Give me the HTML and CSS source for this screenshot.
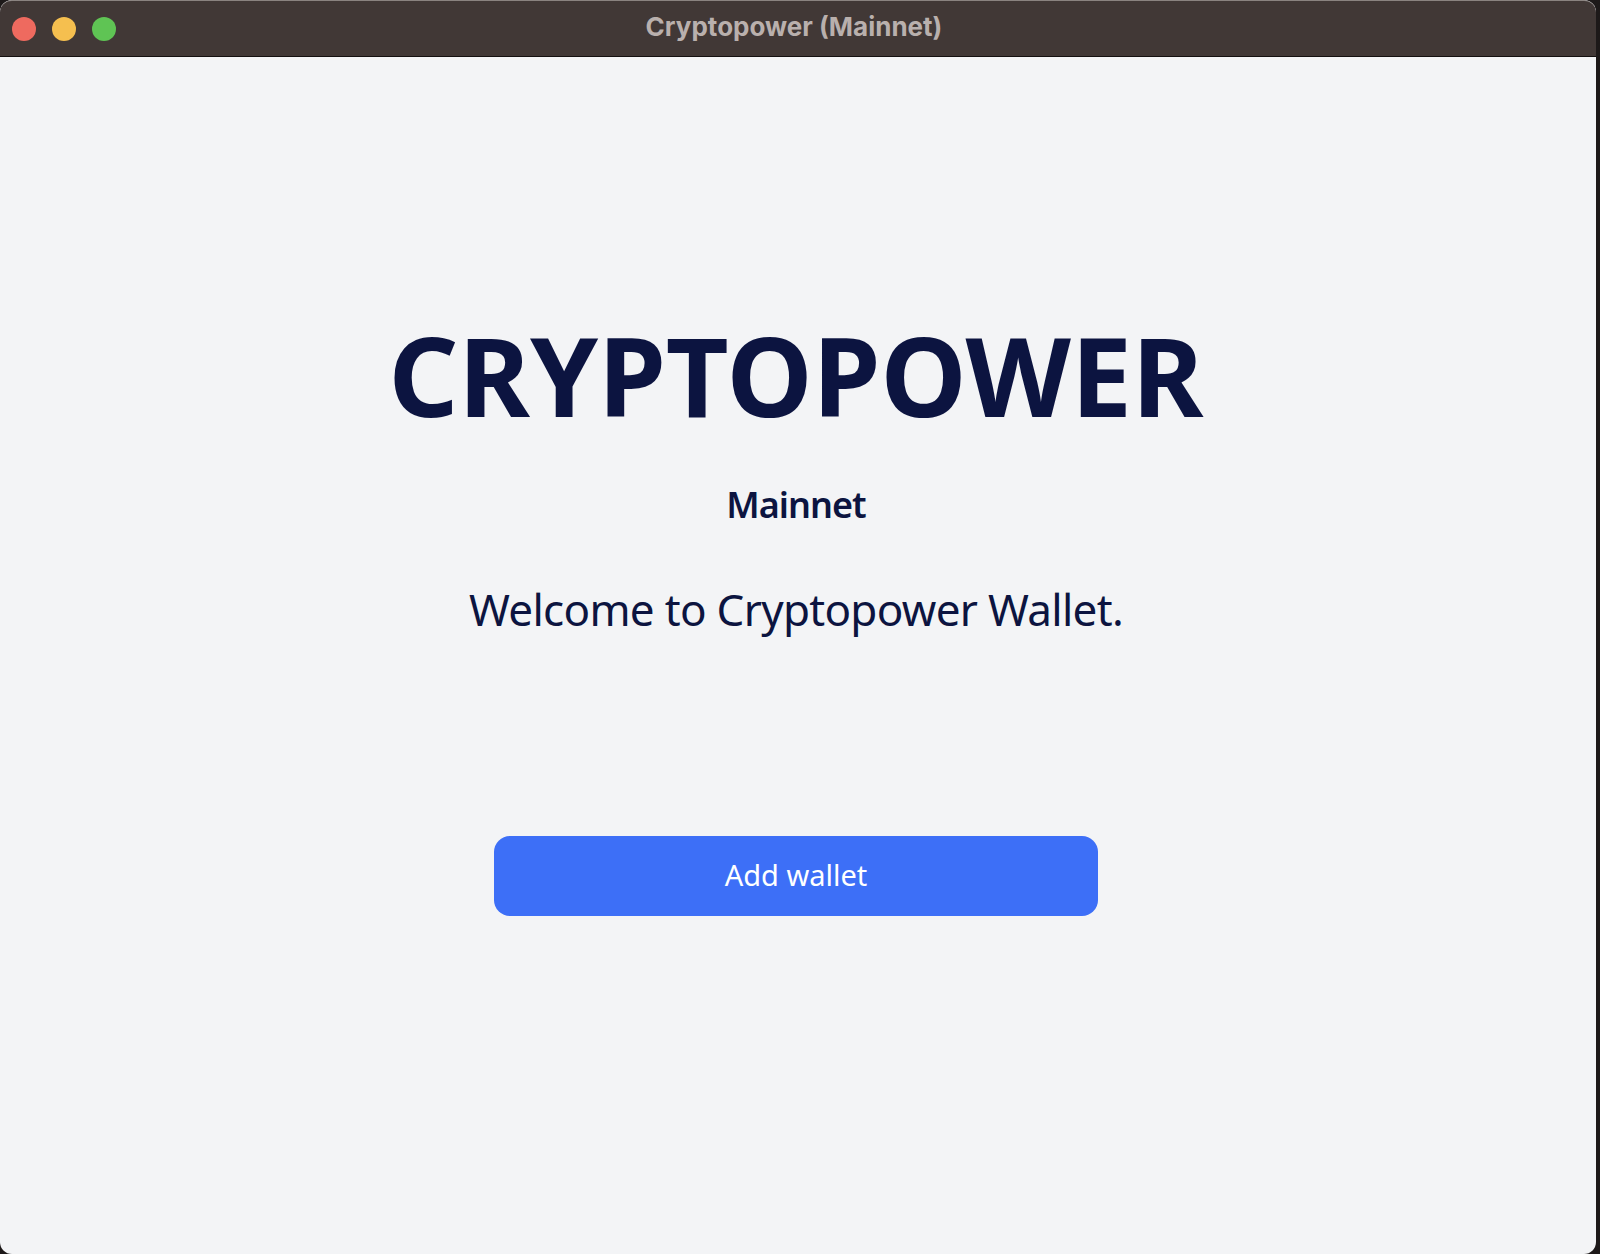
FILE: index.html
```html
<!DOCTYPE html>
<html>
<head>
<meta charset="utf-8">
<title>Cryptopower (Mainnet)</title>
<link rel="stylesheet" href="styles.css">
</head>
<body>
<div class="window">
  <header class="titlebar">
    <div class="lights">
      <span class="light red"></span>
      <span class="light yellow"></span>
      <span class="light green"></span>
    </div>
    <div class="title">Cryptopower (Mainnet)</div>
    <div class="spacer"></div>
  </header>
  <main class="content">
    <h1 class="brand">CRYPTOPOWER</h1>
    <div class="network">Mainnet</div>
    <p class="welcome">Welcome to Cryptopower Wallet.</p>
    <button class="add-wallet">Add wallet</button>
  </main>
</div>
</body>
</html>
```
FILE: styles.css
```css
html, body {
  margin: 0;
  padding: 0;
}
body {
  background: #1d1919;
  width: 1600px;
  height: 1254px;
  overflow: hidden;
}
.window {
  width: 1596px;
  height: 1254px;
  border-radius: 12px;
  overflow: hidden;
  background: #f3f4f6;
  display: flex;
  flex-direction: column;
}
.titlebar {
  height: 55px;
  flex: none;
  background: #413836;
  border-top: 1px solid #8a8380;
  border-bottom: 1px solid #141010;
  display: grid;
  grid-template-columns: 1fr auto 1fr;
  align-items: center;
  border-radius: 12px 12px 0 0;
}
.lights {
  display: flex;
  gap: 16px;
  padding-left: 12px;
  padding-top: 1px;
}
.light {
  width: 24px;
  height: 24px;
  border-radius: 50%;
  display: block;
}
.red { background: #ee6a5f; }
.yellow { background: #f5bf4f; }
.green { background: #5fc454; }
.title {
  font-family: "Inter", "Liberation Sans", sans-serif;
  font-weight: 700;
  font-size: 26px;
  line-height: 30px;
  color: #b9b0ad;
  margin-right: 8px;
  padding-bottom: 3px;
}
.content {
  flex: 1;
  display: flex;
  flex-direction: column;
  align-items: center;
  color: #0c1440;
  font-family: "Noto Sans", "Open Sans", sans-serif;
  padding-right: 4px;
}
.brand {
  margin: 242px 0 0;
  font-size: 109px;
  line-height: 1.4;
  font-weight: 700;
  letter-spacing: 0;
}
.network {
  margin-top: 28px;
  font-size: 36px;
  font-weight: 600;
  line-height: 50px;
  letter-spacing: -1px;
}
.welcome {
  margin: 49px 0 0;
  font-size: 44px;
  font-weight: 400;
  line-height: 60px;
  letter-spacing: -0.7px;
}
.add-wallet {
  margin-top: 197px;
  width: 604px;
  height: 80px;
  border: none;
  border-radius: 16px;
  background: #3d6ff7;
  color: #ffffff;
  font-family: "Noto Sans", "Open Sans", sans-serif;
  font-size: 29px;
  font-weight: 400;
  padding: 0 0 2px;
}
```
